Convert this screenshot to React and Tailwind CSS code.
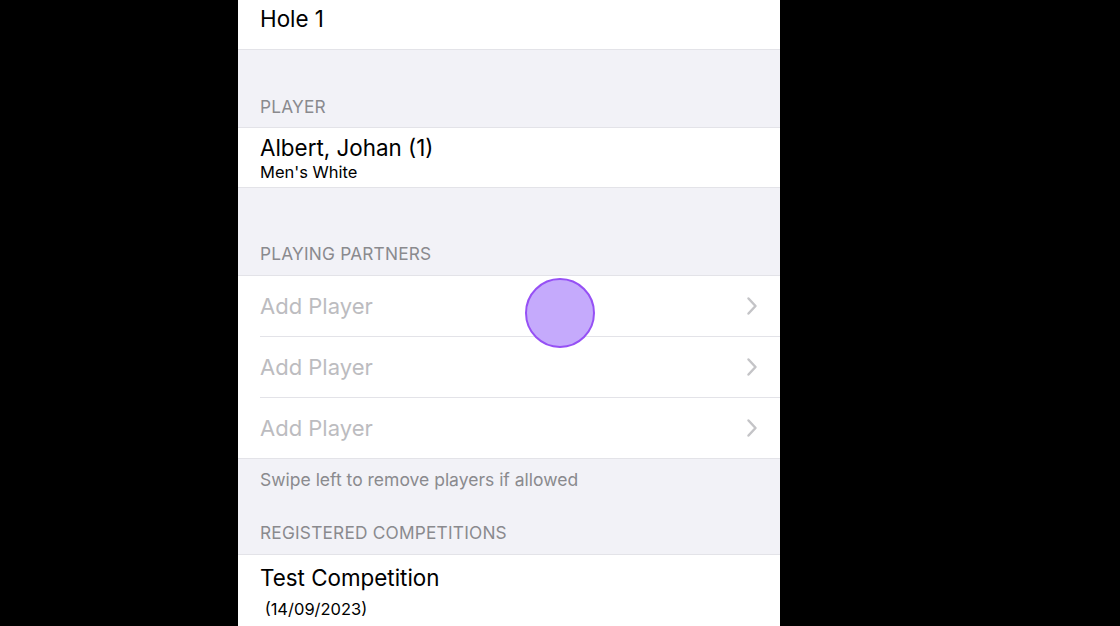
import React from "react";

const font = { fontFamily: "Inter, 'Noto Sans', sans-serif" };

function Chevron() {
  return (
    <svg width="12" height="20" viewBox="0 0 12 20" fill="none">
      <path d="M2.5 2.5 L9.5 10 L2.5 17.5" stroke="#c4c4c7" strokeWidth="2.5" strokeLinecap="round" strokeLinejoin="round" />
    </svg>
  );
}

function AddRow({ last }) {
  return (
    <div className={`${last ? "h-[60px]" : "h-[61px]"} bg-white pl-[22px] flex`}>
      <div className={`flex-1 flex items-center justify-between pr-[22px] ${last ? "" : "border-b border-[#e3e3e8]"}`}>
        <span className="text-[22px] text-[#bcbcc0]">Add Player</span>
        <Chevron />
      </div>
    </div>
  );
}

export default function App() {
  return (
    <div className="w-[1120px] h-[626px] bg-black flex overflow-hidden" style={font}>
      <div className="relative ml-[238px] w-[542px] h-full bg-[#f2f2f7] flex flex-col">
        <div className="h-[50px] bg-white border-b border-[#e3e3e8] pl-[22px] flex items-start pt-[4px] shrink-0">
          <span className="text-[22.4px] leading-[30px] text-black">Hole 1</span>
        </div>
        <div className="h-[77px] flex items-end pb-[10px] pl-[22px] shrink-0">
          <span className="text-[17.3px] leading-[20px] text-[#8a8a8e] uppercase tracking-[0.2px]">Player</span>
        </div>
        <div className="h-[61px] bg-white border-y border-[#e3e3e8] pl-[22px] pt-[6px] flex flex-col shrink-0">
          <span className="text-[22.4px] leading-[28px] text-black">Albert, Johan (1)</span>
          <span className="text-[16.5px] leading-[20px] text-black">Men's White</span>
        </div>
        <div className="h-[87px] flex items-end pb-[11px] pl-[22px] shrink-0">
          <span className="text-[17.3px] leading-[20px] text-[#8a8a8e] uppercase tracking-[0.2px]">Playing Partners</span>
        </div>
        <div className="border-y border-[#e3e3e8] shrink-0">
          <AddRow />
          <AddRow />
          <AddRow last />
        </div>
        <div className="h-[95px] flex flex-col pl-[22px] shrink-0">
          <span className="text-[17.5px] leading-[20px] text-[#8a8a8e] mt-[11px]">Swipe left to remove players if allowed</span>
          <span className="text-[17.3px] leading-[20px] text-[#8a8a8e] uppercase tracking-[0.2px] mt-[33px]">Registered Competitions</span>
        </div>
        <div className="flex-1 bg-white border-t border-[#e3e3e8] pl-[22px] pt-[9px] flex flex-col">
          <span className="text-[22.4px] leading-[28px] text-black">Test Competition</span>
          <span className="text-[16.5px] leading-[20px] text-black mt-[7px]">&nbsp;(14/09/2023)</span>
        </div>
        <div className="absolute left-[287px] top-[278px] w-[70px] h-[70px] rounded-full bg-[#c5aafc] border-[2.5px] border-[#9650f5]" />
      </div>
    </div>
  );
}
